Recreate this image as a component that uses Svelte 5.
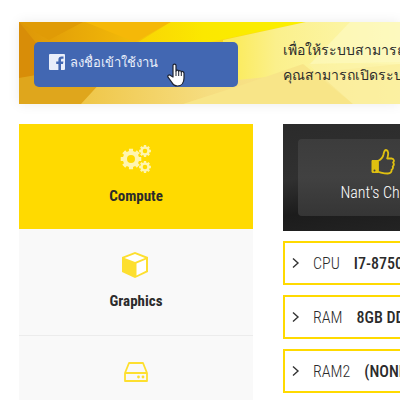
<script>
	const parts = [
		{ name: 'Compute', icon: 'gears' },
		{ name: 'Graphics', icon: 'cube' },
		{ name: 'Storage', icon: 'drive' }
	];
	let selected = $state('Compute');

	const specs = [
		{ label: 'CPU', value: 'I7-8750H' },
		{ label: 'RAM', value: '8GB DDR4' },
		{ label: 'RAM2', value: '(NONE)' }
	];

	// outline of a gear with square teeth and a round hole
	function gear(cx, cy, r, hole) {
		const teeth = 8;
		const points = [];
		for (let i = 0; i < teeth; i++) {
			const a = (i * 2 * Math.PI) / teeth;
			for (const [offset, radius] of [
				[-0.25, r * 0.78],
				[-0.2, r],
				[0.2, r],
				[0.25, r * 0.78]
			]) {
				const x = cx + radius * Math.cos(a + offset);
				const y = cy + radius * Math.sin(a + offset);
				points.push(`${x.toFixed(2)} ${y.toFixed(2)}`);
			}
		}
		return `M${points.join('L')}ZM${cx - hole} ${cy}a${hole} ${hole} 0 1 0 ${hole * 2} 0a${hole} ${hole} 0 1 0 ${-hole * 2} 0Z`;
	}
</script>

<main>
	<header>
		<svg class="facets" viewBox="0 0 381 82" preserveAspectRatio="xMinYMin slice" aria-hidden="true">
			<defs>
				<linearGradient id="base" x1="0" x2="1">
					<stop offset="0" stop-color="#dd9608" />
					<stop offset="0.25" stop-color="#efb408" />
					<stop offset="0.4" stop-color="#f8d008" />
					<stop offset="1" stop-color="#fbe84e" />
				</linearGradient>
				<linearGradient id="bright" x1="0" x2="1">
					<stop offset="0" stop-color="#f9d404" />
					<stop offset="0.4" stop-color="#fbe800" />
					<stop offset="1" stop-color="#fbf000" />
				</linearGradient>
				<linearGradient id="pale" x1="0" x2="1">
					<stop offset="0" stop-color="#fbea50" />
					<stop offset="0.3" stop-color="#fbf08c" />
					<stop offset="1" stop-color="#fdf8b4" />
				</linearGradient>
				<linearGradient id="low" x1="0" x2="1">
					<stop offset="0" stop-color="#efc648" />
					<stop offset="0.4" stop-color="#f6dd80" />
					<stop offset="1" stop-color="#fbee98" />
				</linearGradient>
			</defs>
			<rect width="381" height="82" fill="url(#base)" />
			<path d="M0 0l18 22v32L0 56Z" fill="#d88d08" />
			<path d="M0 0h64L30 18Z" fill="#e09b06" />
			<path d="M66 0h86l-36 20Z" fill="#f5b808" />
			<path d="M152 0h135L182 22h-66Z" fill="url(#bright)" />
			<path d="M287 0h94v82H204V18Z" fill="url(#pale)" />
			<path d="M0 56l80-14v40H0Z" fill="#dfa61c" />
			<path d="M62 82l22-24h134l163-16v40Z" fill="url(#low)" />
			<path d="M164 82l56-18 64-22 50 40Z" fill="#f8e588" />
			<path d="M331 0h50v40l-90 2Z" fill="#fefac4" opacity="0.6" />
			<path d="M289 42l45 40h47V42Z" fill="#fcf2a6" opacity="0.6" />
		</svg>

		<button class="login">
			<svg viewBox="0 0 16 16" width="16" height="16" aria-hidden="true">
				<path
					fill="#e9eefa"
					d="M1 0h14a1 1 0 0 1 1 1v14a1 1 0 0 1-1 1h-3V10h2l.4-2.500H12V6c0-.8.3-1.200 1.200-1.200h1.300V2.600c-.4-.1-1.100-.1-1.900-.1-2 0-3.200 1.200-3.200 3.200v1.800H7.200V10h2.200v6H1a1 1 0 0 1-1-1V1a1 1 0 0 1 1-1Z"
				/>
			</svg>
			<span>ลงชื่อเข้าใช้งาน</span>
			<svg class="pointer" viewBox="0 0 18 24" width="18" height="24" aria-hidden="true">
				<path
					fill="#fff"
					stroke="#1d2230"
					stroke-width="1.2"
					stroke-linejoin="round"
					d="M6 14V2.5C6 .6 9 .6 9 2.5V8c.3-1.3 2.5-1.1 2.7.3.5-1 2.4-.7 2.6.6.6-.8 2.7-.4 2.7 1.3V15c0 4-2 8-6.500 8-3 0-4.500-1.500-5.700-3.600L1 14.200c-.9-1.700 1.200-2.900 2.500-1.700Z"
				/>
				<path fill="none" stroke="#1d2230" d="M9 8v5M11.700 8.300V13M14.300 9v4" />
			</svg>
		</button>
		<p>เพื่อให้ระบบสามารถทำงานได้<br />คุณสามารถเปิดระบบได้ที่นี่</p>
	</header>

	<div class="columns">
		<nav>
			{#each parts as part}
				<button class="part" class:active={selected === part.name} onclick={() => (selected = part.name)}>
					<svg viewBox="0 0 32 32" width="32" height="32" aria-hidden="true">
						{#if part.icon === 'gears'}
							<path
								fill="currentColor"
								fill-rule="evenodd"
								d={gear(11, 15, 10.5, 4) + gear(25, 7, 6, 2.3) + gear(25, 23, 6, 2.3)}
							/>
						{:else if part.icon === 'cube'}
							<path fill="currentColor" d="M15 3l13 5v15l-13 6-13-6V8Z" />
							<path fill="#fff" d="M15 5l10 4-10 4-10.500-4ZM16.500 14.500L26 10.500v11.300l-9.500 4.600Z" />
						{:else}
							<g fill="none" stroke="currentColor" stroke-width="1.800" stroke-linejoin="round">
								<path d="M9 7h14l4 10v8H5v-8ZM5 17h22" />
							</g>
							<circle cx="18.500" cy="21" r="1.400" fill="currentColor" />
							<circle cx="23" cy="21" r="1.400" fill="currentColor" />
						{/if}
					</svg>
					{part.name}
				</button>
			{/each}
		</nav>

		<section>
			<div class="hero">
				<button class="choice">
					<svg viewBox="0 0 24 26" width="24" height="26" aria-hidden="true">
						<path fill="currentColor" fill-rule="evenodd" d="M1 11h6v13H1.500L.5 23V12ZM3.500 20.500a1 1 0 1 0 0 2 1 1 0 0 0 0-2Z" />
						<path
							fill="none"
							stroke="currentColor"
							stroke-width="1.800"
							stroke-linejoin="round"
							d="M7 12c3-1.500 5-4 5.500-6.500C13 2.500 13.500 1 15 1c2.500.5 2.800 3.500 1.200 8.500h4.300c2.700.2 3 2.800 1.600 4 1.100 1.500.8 3-.4 3.900.6 1.600.1 2.800-1.100 3.400.2 2-1 3.700-3.600 3.700-4 .2-6.500-1-10-1.700Z"
						/>
					</svg>
					Nant's Choice
				</button>
			</div>
			<ul>
				{#each specs as spec}
					<li>
						<svg viewBox="0 0 8 12" width="8" height="12" aria-hidden="true">
							<path fill="none" stroke="#333" stroke-width="1.400" d="M1 1.500L6 6l-5 4.500" />
						</svg>
						<span>{spec.label}</span>
						<strong>{spec.value}</strong>
					</li>
				{/each}
			</ul>
		</section>
	</div>
</main>

<style>
	:global(body) {
		margin: 0;
		background: #fff;
		overflow: hidden;
	}

	main {
		display: flex;
		flex-direction: column;
		gap: 20px;
		padding: 22px 0 0 19px;
		font-family: 'Roboto Condensed', 'Liberation Sans Narrow', 'DejaVu Sans Condensed', sans-serif;
		font-size: 16px;
		color: #2b2b2b;
	}

	button {
		font: inherit;
		border: none;
		cursor: pointer;
	}

	header {
		position: relative;
		display: grid;
		grid-template-columns: 204px 1fr;
		gap: 45px;
		align-items: center;
		height: 82px;
		padding-left: 15px;
		box-shadow: 0 0 12px rgba(0, 0, 0, 0.08);
		overflow: hidden;
	}
	.facets {
		position: absolute;
		inset: 0;
		width: 100%;
		height: 100%;
	}
	.login {
		position: relative;
		display: flex;
		align-items: center;
		gap: 5px;
		height: 45px;
		margin-top: 2px;
		padding: 0 15px 4px;
		border-radius: 5px;
		background: #4267b2;
		color: #e9eefa;
		font-size: 13px;
		font-weight: 300;
		white-space: nowrap;
	}
	.pointer {
		position: absolute;
		left: 133px;
		top: 21px;
	}
	header p {
		position: relative;
		margin: 0;
		font-size: 14px;
		font-weight: 300;
		line-height: 25px;
		white-space: nowrap;
	}

	.columns {
		display: grid;
		grid-template-columns: 234px minmax(200px, 1fr);
		gap: 30px;
	}
	nav {
		display: flex;
		flex-direction: column;
		background: #f9f9f9;
	}
	.part {
		display: flex;
		flex-direction: column;
		align-items: center;
		gap: 10px;
		height: 107px;
		padding: 20px 0 0;
		border-bottom: 1px solid #ececec;
		background: #f9f9f9;
		color: #2b2b2b;
		font-size: 15px;
		font-weight: bold;
		line-height: 20px;
	}
	.part svg {
		color: #fddf2f;
	}
	.part.active {
		height: 105px;
		border-bottom: none;
		background: #ffda00;
	}
	.active svg {
		color: #fff5b0;
	}

	.hero {
		padding: 15px;
		background: linear-gradient(170deg, #2b2b2b 0%, #303030 40%, #1c1c1c 65%, #262626 100%);
	}
	.choice {
		display: flex;
		flex-direction: column;
		align-items: center;
		gap: 6px;
		width: 100%;
		height: 77px;
		padding: 10px 0 0;
		border-radius: 4px;
		background: linear-gradient(#3c3c3c, #414141 50%, #353535);
		color: #fff;
		font-size: 16px;
		font-weight: 300;
		line-height: 24px;
		white-space: nowrap;
	}
	.choice svg {
		color: #e0c010;
	}

	ul {
		display: flex;
		flex-direction: column;
		gap: 10px;
		margin: 10px 0 0;
		padding: 0;
		list-style: none;
	}
	li {
		display: flex;
		align-items: center;
		height: 40px;
		padding-left: 7px;
		border: 2px solid #ffda00;
		white-space: nowrap;
	}
	li svg {
		flex: none;
	}
	li span {
		margin: 0 14px 0 13px;
		font-weight: 300;
	}
	li strong {
		font-weight: 500;
	}
</style>
